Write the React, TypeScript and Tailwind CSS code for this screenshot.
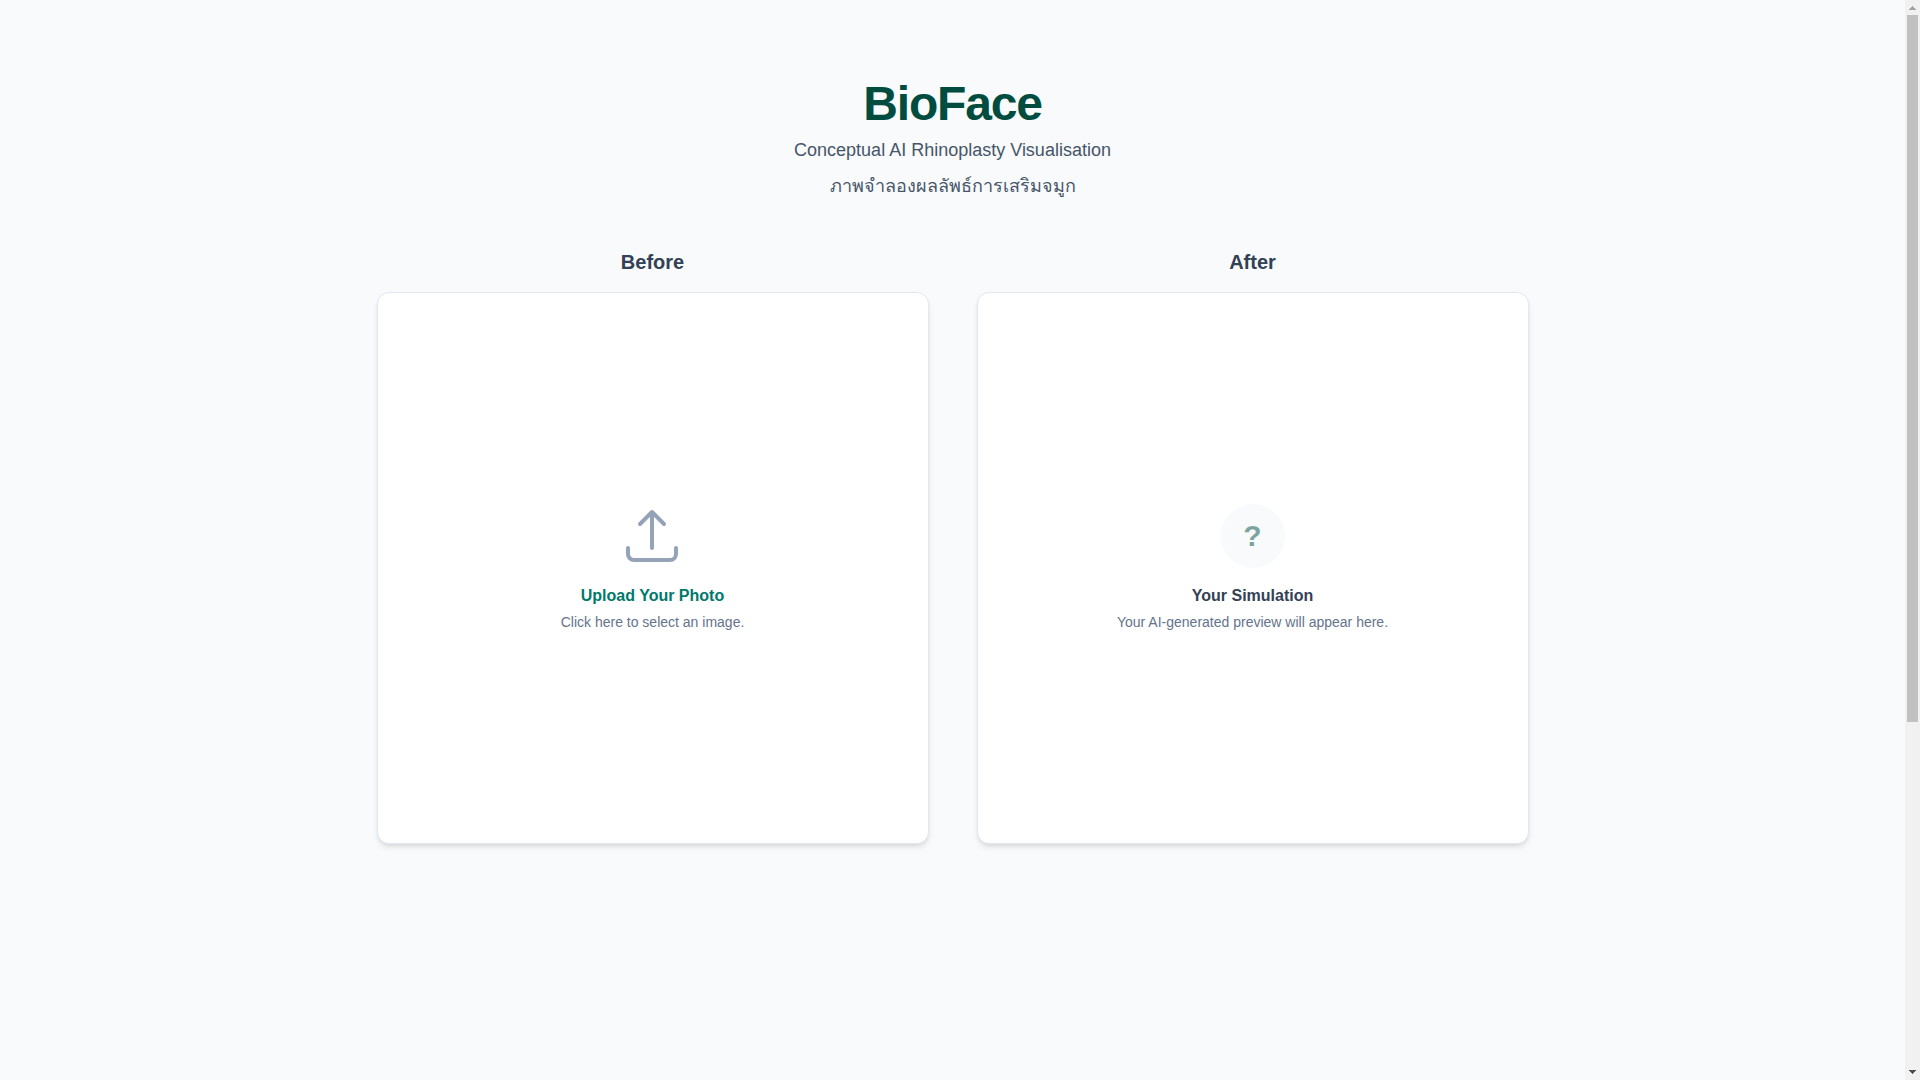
import React, { useState } from 'react';

interface PanelProps {
  title: string;
  children: React.ReactNode;
}

interface ScrollRailProps {
  // visible share of the page, in percent
  visible: number;
}

const UploadIcon: React.FC<{ className?: string }> = ({ className }) => (
  <svg className={className} fill="none" viewBox="0 0 24 24" strokeWidth={1.5} stroke="currentColor" aria-hidden="true">
    <path
      strokeLinecap="round"
      strokeLinejoin="round"
      d="M3 16.5v2.25A2.25 2.25 0 0 0 5.25 21h13.5A2.25 2.25 0 0 0 21 18.75V16.5m-13.5-9L12 3m0 0 4.5 4.5M12 3v13.5"
    />
  </svg>
);

const Header: React.FC = () => (
  <header className="text-center mb-12">
    <h1 className="text-5xl font-bold tracking-tight text-[#004d40]">BioFace</h1>
    <p className="mt-2 text-lg text-[#475569]">Conceptual AI Rhinoplasty Visualisation</p>
    <p className="mt-2 text-lg text-[#475569]">ภาพจำลองผลลัพธ์การเสริมจมูก</p>
  </header>
);

const Panel: React.FC<PanelProps> = ({ title, children }) => (
  <section className="flex flex-col">
    <h2 className="mb-4 text-center text-xl font-semibold text-[#334155]">{title}</h2>
    <div className="aspect-square w-full overflow-hidden rounded-xl border border-[#e2e8f0] bg-white shadow-md">
      {children}
    </div>
  </section>
);

const ScrollRail: React.FC<ScrollRailProps> = ({ visible }) => (
  <div className="sticky top-0 flex h-screen w-[15px] shrink-0 flex-col bg-[#f1f1f1]" aria-hidden="true">
    <svg className="h-[15px] w-[15px]" viewBox="0 0 15 15" shapeRendering="crispEdges">
      <path d="M7 6h1v1h1v1h1v1h1v1H4V9h1V8h1V7h1z" fill="#a3a3a3" />
    </svg>
    <div className="grow px-[2px]">
      <div className="w-[11px] bg-[#c1c1c1]" style={{ height: `${visible}%` }} />
    </div>
    <svg className="h-[15px] w-[15px]" viewBox="0 0 15 15" shapeRendering="crispEdges">
      <path d="M4 5h7v1h-1v1H9v1H8v1H7V8H6V7H5V6H4z" fill="#505050" />
    </svg>
  </div>
);

const App: React.FC = () => {
  const [photo, setPhoto] = useState<string | null>(null);

  const handleFileChange = (e: React.ChangeEvent<HTMLInputElement>) => {
    const file = e.target.files?.[0];
    if (file) setPhoto(URL.createObjectURL(file));
  };

  return (
    <div className="flex min-h-screen bg-[#f8fafc] font-['Liberation_Sans',sans-serif] text-[#1e293b]">
      <div className="min-w-0 grow px-8 py-20">
        <div className="mx-auto max-w-6xl">
          <Header />

          <main className="grid grid-cols-1 gap-12 md:grid-cols-2">
            <Panel title="Before">
              <input id="photo" type="file" accept="image/*" className="sr-only" onChange={handleFileChange} />
              <label
                htmlFor="photo"
                className="flex h-full w-full cursor-pointer items-center justify-center text-center"
              >
                {photo ? (
                  <img src={photo} alt="Before" className="h-full w-full object-cover" />
                ) : (
                  <span className="block">
                    <UploadIcon className="mx-auto h-16 w-16 text-[#94a3b8]" />
                    <span className="mt-4 block text-base font-semibold text-[#00796b]">Upload Your Photo</span>
                    <span className="mt-1 block text-sm text-[#64748b]">Click here to select an image.</span>
                  </span>
                )}
              </label>
            </Panel>

            <Panel title="After">
              <div className="flex h-full w-full flex-col items-center justify-center text-center">
                <div className="flex h-16 w-16 items-center justify-center rounded-full bg-[#f8fafc]">
                  <span className="text-3xl font-bold text-[#004d40]/50">?</span>
                </div>
                <h3 className="mt-4 text-base font-semibold text-[#334155]">Your Simulation</h3>
                <p className="mt-1 text-sm text-[#64748b]">Your AI-generated preview will appear here.</p>
              </div>
            </Panel>
          </main>
        </div>
      </div>

      <ScrollRail visible={67.3} />
    </div>
  );
};

export default App;
